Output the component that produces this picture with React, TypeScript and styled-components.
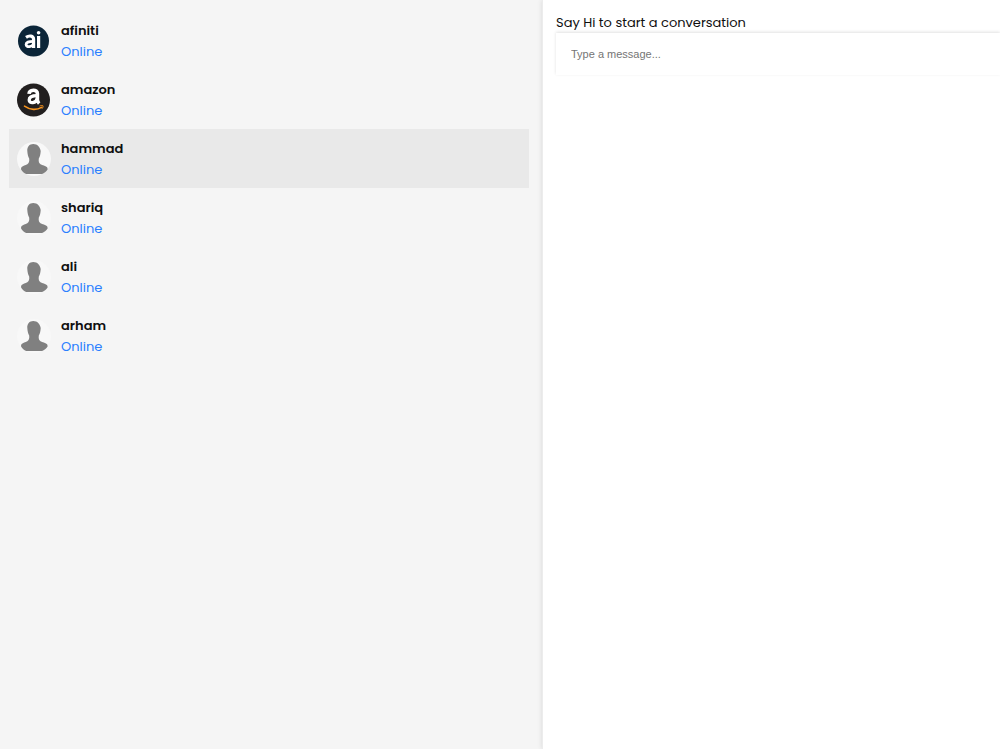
import React from "react";
import styled, { createGlobalStyle } from "styled-components";

const GlobalStyle = createGlobalStyle`
  *, *::before, *::after { box-sizing: border-box; }
  body {
    margin: 0;
    background: #fff;
    color: #0f0f0f;
    font-family: Poppins, Inter, "Liberation Sans", sans-serif;
    font-size: 13px;
    line-height: 21px;
  }
`;

const Page = styled.div`
  display: grid;
  grid-template-columns: minmax(0, 542fr) minmax(0, 458fr);
  min-height: 100vh;
  overflow: hidden;
`;

const Sidebar = styled.aside`
  padding: 11px 13px 11px 9px;
  background: #f5f5f5;
`;

const ContactList = styled.ul`
  margin: 0;
  padding: 0;
  list-style: none;
`;

const ContactButton = styled.button<{ $active: boolean }>`
  display: flex;
  align-items: center;
  gap: 10px;
  width: 100%;
  height: 59px;
  padding: 0 8px;
  border: 0;
  background: ${(p) => (p.$active ? "#e9e9e9" : "transparent")};
  color: inherit;
  font: inherit;
  text-align: left;
  cursor: pointer;
`;

const Avatar = styled.svg`
  flex: none;
  width: 34px;
  height: 34px;
`;

const ContactText = styled.span`
  display: flex;
  flex-direction: column;
`;

const Name = styled.span`
  font-weight: 600;
`;

const Status = styled.span`
  color: #2b7fff;
`;

const Chat = styled.main`
  padding: 12px 0 0 13px;
  border-left: 1px solid #ececec;
  background: #fff;
  box-shadow: 0 0 5px rgba(0, 0, 0, 0.12);
`;

const Hint = styled.p`
  margin: 0;
`;

const MessageInput = styled.input`
  display: block;
  width: 100%;
  height: 42px;
  padding: 0 15px;
  border: 0;
  outline: 0;
  background: #fff;
  box-shadow: 0 -1px 3px rgba(0, 0, 0, 0.12);
  font-family: "Liberation Sans", Arial, sans-serif;
  font-size: 11px;

  &::placeholder {
    color: #757575;
    opacity: 1;
  }
`;

type AvatarKind = "afiniti" | "amazon" | "person";

const art: Record<AvatarKind, React.ReactNode> = {
  afiniti: (
    <>
      <circle cx="16.5" cy="17" r="15.5" fill="#0b2538" />
      <g fill="none" stroke="#fff" strokeWidth="3.2">
        <path d="M9 13.4C12 11.3 16.6 11.3 16.6 15.6V24" />
        <path d="M16.2 17.4c-4.7 0-7.1.9-7.1 3 0 3.4 6.3 2.6 7.3-.5" strokeWidth="2.8" />
        <path d="M21.6 12V24" />
      </g>
      <circle cx="21.6" cy="8.7" r="1.8" fill="#fff" />
    </>
  ),
  amazon: (
    <>
      <circle cx="16.5" cy="17" r="16.5" fill="#221f1f" />
      <g fill="none" stroke="#fff" strokeWidth="3.6">
        <path d="M12 10.9c.4-4.8 8.4-5 8.4-.3v6.2c0 1.8.6 2.6 1.8 3.7" />
        <path d="M20.2 12.6c-5.1 0-8 1.1-8 4.3 0 4.3 7 3.4 8-1.3" strokeWidth="3.3" />
      </g>
      <path d="M7.5 23.2c5.6 4 12.4 4.1 17 1.2" fill="none" stroke="#f7941e" strokeWidth="1.6" strokeLinecap="round" />
      <path d="M22.6 23c1.3-.6 2.8-.6 3.4-.2.2 1-.2 2-1 2.9" fill="none" stroke="#f7941e" strokeWidth="1" />
    </>
  ),
  person: (
    <>
      <circle cx="17" cy="17" r="17" fill="#f8f8f8" />
      <path
        d="M16.3 2C12.4 2 10 4.8 10.3 9c.2 3.1.8 5.6 1.9 7.6.3 2.9-.2 4.8-1.9 5.7-2 1-4.3 1.6-5.6 2.7-.6.6-.7 1.5-.6 2.4 1.2 2.1 3 3.8 5 4.6h16c2-.8 4.200-2.500 5.500-4.600 0-.9-.1-1.700-.8-2.300-1.400-1.200-4.300-1.900-6.300-2.900-1.500-.8-2.100-2.600-1.700-5.600 1.200-2 1.700-4.500 1.900-7.600C23 4.800 20.300 2 16.300 2Z"
        fill="#808080"
      />
    </>
  ),
};

const contacts: { name: string; avatar: AvatarKind }[] = [
  { name: "afiniti", avatar: "afiniti" },
  { name: "amazon", avatar: "amazon" },
  { name: "hammad", avatar: "person" },
  { name: "shariq", avatar: "person" },
  { name: "ali", avatar: "person" },
  { name: "arham", avatar: "person" },
];

export default function App() {
  const [selected, setSelected] = React.useState("hammad");
  return (
    <>
      <GlobalStyle />
      <Page>
        <Sidebar>
          <ContactList>
            {contacts.map((c) => (
              <li key={c.name}>
                <ContactButton
                  type="button"
                  $active={c.name === selected}
                  onClick={() => setSelected(c.name)}
                >
                  <Avatar viewBox="0 0 34 34" aria-hidden="true">
                    {art[c.avatar]}
                  </Avatar>
                  <ContactText>
                    <Name>{c.name}</Name>
                    <Status>Online</Status>
                  </ContactText>
                </ContactButton>
              </li>
            ))}
          </ContactList>
        </Sidebar>
        <Chat>
          <Hint>Say Hi to start a conversation</Hint>
          <MessageInput type="text" aria-label="Message" placeholder="Type a message..." />
        </Chat>
      </Page>
    </>
  );
}
